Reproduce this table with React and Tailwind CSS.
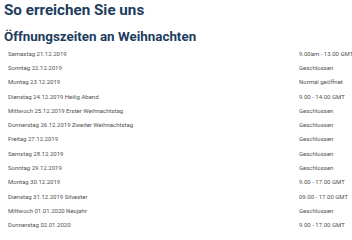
const rows = [
    ['Samastag 21.12.2019', '9.00am - 13.00 GMT'],
    ['Sonntag 22.12.2019', 'Geschlossen'],
    ['Montag 23.12.2019', 'Normal geöffnet'],
    ['Dienstag 24.12.2019 Heilig Abend', '9.00 - 14.00 GMT'],
    ['Mittwoch 25.12.2019 Erster Weihnachtstag', 'Geschlossen'],
    ['Donnerstag 26.12.2019 Zweiter Weihnachtstag', 'Geschlossen'],
    ['Freitag 27.12.2019', 'Geschlossen'],
    ['Samstag 28.12.2019', 'Geschlossen'],
    ['Sonntag 29.12.2019', 'Geschlossen'],
    ['Montag 30.12.2019', '9.00 - 17.00 GMT'],
    ['Dienstag 31.12.2019 Silvester', '09.00 - 17.00 GMT'],
    ['Mittwoch 01.01.2020 Neujahr', 'Geschlossen'],
    ['Donnerstag 02.01.2020', '9.00 - 17.00 GMT'],
];

const App = () => {
    return (
        <div className="w-[352px] h-[240px] overflow-hidden bg-white px-[4px] font-['Roboto',sans-serif]">
            <h1 className="pt-[1px] text-[15.2px] leading-[18px] font-bold text-[#1d3c5e]">So erreichen Sie uns</h1>
            <h2 className="mt-[10px] text-[13.4px] leading-[16px] font-bold text-[#1d3c5e]">Öffnungszeiten an Weihnachten</h2>
            <div className="mt-[1px] text-[6px] text-[#505050]">
                {rows.map(([day, time]) => (
                    <div key={day} className="flex h-[14.3px] items-center whitespace-nowrap">
                        <div className="flex-1 pl-[4px]">{day}</div>
                        <div className="w-[49px]">{time}</div>
                    </div>
                ))}
            </div>
        </div>
    );
};

export default App;
